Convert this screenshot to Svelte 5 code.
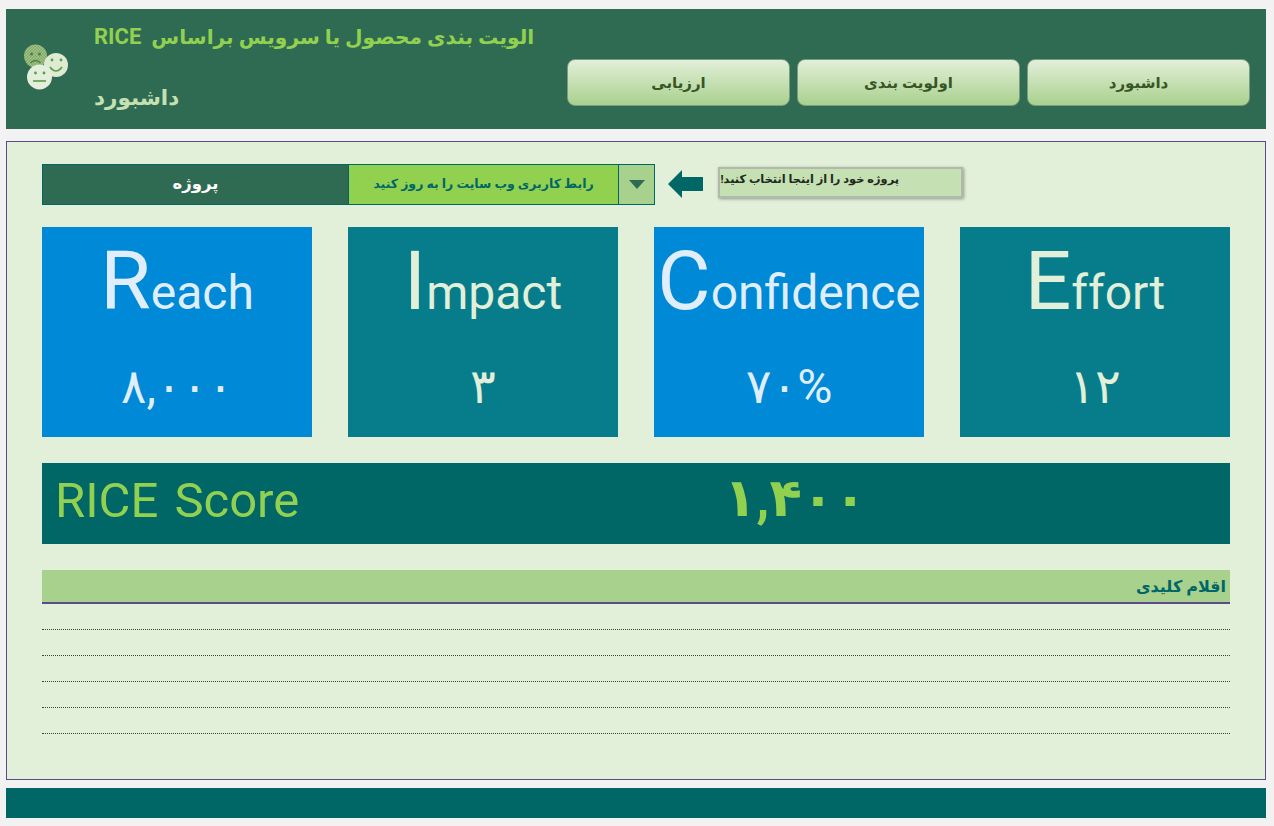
<script>
	const navItems = ['داشبورد', 'اولویت بندی', 'ارزیابی'];

	const cards = [
		{ first: 'R', rest: 'each', value: '۸,۰۰۰', tone: 'blue' },
		{ first: 'I', rest: 'mpact', value: '۳', tone: 'teal' },
		{ first: 'C', rest: 'onfidence', value: '۷۰%', tone: 'blue' },
		{ first: 'E', rest: 'ffort', value: '۱۲', tone: 'teal' }
	];

	const emptyRows = [1, 2, 3, 4, 5];
</script>

<div class="page">
	<header class="top-bar">
		<div class="brand">
			<svg class="logo" viewBox="0 0 48 48" width="48" height="48" aria-hidden="true">
				<defs>
					<pattern id="mottle" width="3" height="3" patternUnits="userSpaceOnUse">
						<rect width="3" height="3" fill="#a3c586" />
						<rect width="1.5" height="1.5" fill="#7fa868" />
						<rect x="1.5" y="1.5" width="1.5" height="1.5" fill="#7fa868" />
					</pattern>
				</defs>
				<circle cx="11.5" cy="12" r="11.5" fill="url(#mottle)" />
				<circle cx="7.5" cy="10" r="1.5" fill="#4f7f45" />
				<circle cx="15.5" cy="10" r="1.5" fill="#4f7f45" />
				<path d="M6.5 19 q5 -5 10 0" fill="none" stroke="#4f7f45" stroke-width="1.5" />
				<circle cx="32" cy="21" r="12" fill="#dcebd1" />
				<circle cx="28" cy="16" r="1.4" fill="#5c9a4c" />
				<circle cx="37" cy="16" r="1.4" fill="#5c9a4c" />
				<path d="M26 23 q6 8 12 0" fill="none" stroke="#5c9a4c" stroke-width="1.6" />
				<circle cx="15.5" cy="33" r="12.5" fill="#e3efda" />
				<circle cx="11.5" cy="29" r="1.4" fill="#5c9a4c" />
				<circle cx="20" cy="29" r="1.4" fill="#5c9a4c" />
				<path d="M9 37 h13" fill="none" stroke="#5c9a4c" stroke-width="1.6" />
			</svg>
			<div class="titles">
				<h1 dir="rtl">الویت بندی محصول یا سرویس براساس&nbsp; <span class="latin">RICE</span></h1>
				<h2>داشبورد</h2>
			</div>
		</div>
		<nav dir="rtl">
			{#each navItems as item}
				<button type="button">{item}</button>
			{/each}
		</nav>
	</header>

	<main class="panel">
		<div class="project-row">
			<div class="slicer">
				<div class="slicer-label">پروژه</div>
				<div class="slicer-value">رابط کاربری وب سایت را به روز کنید</div>
				<div class="slicer-toggle"><span class="caret"></span></div>
			</div>
			<svg class="arrow" viewBox="0 0 35 28" width="35" height="28" aria-hidden="true">
				<path d="M0 14 L14 0 V7 H35 V21 H14 V28 Z" fill="#006666" />
			</svg>
			<div class="hint" dir="rtl">پروژه خود را از اینجا انتخاب کنید!</div>
		</div>

		<section class="cards">
			{#each cards as card}
				<div class="card {card.tone}">
					<div class="card-name"><span class="big">{card.first}</span>{card.rest}</div>
					<div class="card-value">{card.value}</div>
				</div>
			{/each}
		</section>

		<section class="score">
			<span class="score-label">RICE Score</span>
			<span class="score-value">۱,۴۰۰</span>
		</section>

		<section class="key-items">
			<h3 dir="rtl">اقلام کلیدی</h3>
			{#each emptyRows as row (row)}
				<div class="row"></div>
			{/each}
		</section>
	</main>

	<footer class="bottom-bar"></footer>
</div>

<style>
	:global(body) {
		background: #f2f2f2;
		font-family: Roboto, "DejaVu Sans", sans-serif;
	}

	.page {
		width: 1260px;
		margin-left: 6px;
		padding-top: 9px;
		display: flex;
		flex-direction: column;
	}

	.top-bar {
		height: 120px;
		background: #2f6b52;
		display: flex;
		justify-content: space-between;
		box-sizing: border-box;
		padding: 0 16px 0 18px;
	}

	.brand {
		display: flex;
		align-items: center;
		gap: 22px;
	}

	.logo {
		margin-top: -2px;
	}

	.titles {
		align-self: flex-start;
	}

	h1 {
		margin: 15px 0 0;
		font-size: 20.2px;
		line-height: 26px;
		font-weight: 700;
		color: #92d050;
		white-space: nowrap;
	}

	.latin {
		font-size: 22px;
		font-weight: 700;
	}

	h2 {
		margin: 32px 0 0;
		font-size: 21.5px;
		line-height: 32px;
		font-weight: 700;
		color: #c5e0b3;
		text-align: left;
	}

	nav {
		display: flex;
		gap: 7px;
		margin-top: 50px;
	}

	nav button {
		width: 223px;
		height: 47px;
		padding: 0;
		border: 1px solid #7d9a84;
		border-radius: 8px;
		background: linear-gradient(#e2efd9, #a9d18e);
		font: 700 15px Roboto, "DejaVu Sans", sans-serif;
		color: #375623;
	}

	.panel {
		margin-top: 12px;
		height: 639px;
		box-sizing: border-box;
		background: #e2efd9;
		border: 1px solid #5b4b8a;
		padding: 22px 35px 0;
	}

	.project-row {
		display: flex;
		align-items: flex-start;
		height: 41px;
	}

	.slicer {
		display: flex;
		width: 613px;
		height: 41px;
		box-sizing: border-box;
		border: 1px solid #006666;
	}

	.slicer-label {
		width: 305px;
		background: #2f6b52;
		color: #fff;
		font-size: 16.5px;
		font-weight: 700;
		line-height: 38px;
		text-align: center;
	}

	.slicer-value {
		flex: 1;
		background: #92d050;
		color: #006666;
		font-size: 12.5px;
		font-weight: 700;
		line-height: 38px;
		text-align: center;
		border-left: 1px solid #006666;
		border-right: 1px solid #006666;
	}

	.slicer-toggle {
		width: 35px;
		background: #a9d18e;
		display: flex;
		align-items: center;
		justify-content: center;
	}

	.caret {
		border-left: 8px solid transparent;
		border-right: 8px solid transparent;
		border-top: 9px solid #2f6b52;
	}

	.arrow {
		margin: 6px 15px 0 13px;
	}

	.hint {
		width: 245px;
		height: 31px;
		margin-top: 3px;
		box-sizing: border-box;
		background: #c5e0b3;
		border: 2px solid #b3b8ac;
		box-shadow: 1px 1px 3px #8e9a86;
		padding: 0 62px 0 0;
		font-size: 11.4px;
		font-weight: 700;
		line-height: 21px;
		color: #1f2a1c;
		white-space: nowrap;
	}

	.cards {
		display: grid;
		grid-template-columns: repeat(4, 270px);
		gap: 36px;
		margin-top: 22px;
	}

	.card {
		height: 210px;
		color: #e2efd9;
		text-align: center;
	}

	.card.blue {
		background: #0089d6;
		color: #dfeefa;
	}

	.card.teal {
		background: #077d8c;
	}

	.card-name {
		font-size: 48px;
		line-height: 108px;
		height: 108px;
		white-space: nowrap;
	}

	.big {
		font-size: 82px;
	}

	.card-value {
		margin-top: 17px;
		font-size: 48px;
		line-height: 70px;
		letter-spacing: -3px;
	}

	.score {
		display: flex;
		align-items: center;
		height: 81px;
		box-sizing: border-box;
		padding-bottom: 6px;
		margin-top: 26px;
		background: #006666;
		color: #92d050;
	}

	.score-label {
		margin-left: 13px;
		width: 245px;
		font-size: 49px;
		word-spacing: 4px;
		white-space: nowrap;
	}

	.score-value {
		margin-left: 424px;
		font-size: 53px;
		font-weight: 700;
		letter-spacing: -1px;
		margin-top: -6px;
	}

	.key-items {
		margin-top: 26px;
	}

	h3 {
		margin: 0;
		height: 32px;
		background: #a9d18e;
		border-bottom: 2px solid #5b4b8a;
		padding: 0 4px 0 0;
		font-size: 16px;
		font-weight: 700;
		line-height: 33px;
		color: #006666;
	}

	.row {
		height: 25px;
		border-bottom: 1px dotted #404040;
	}

	.bottom-bar {
		height: 30px;
		margin-top: 8px;
		background: #006666;
	}
</style>
